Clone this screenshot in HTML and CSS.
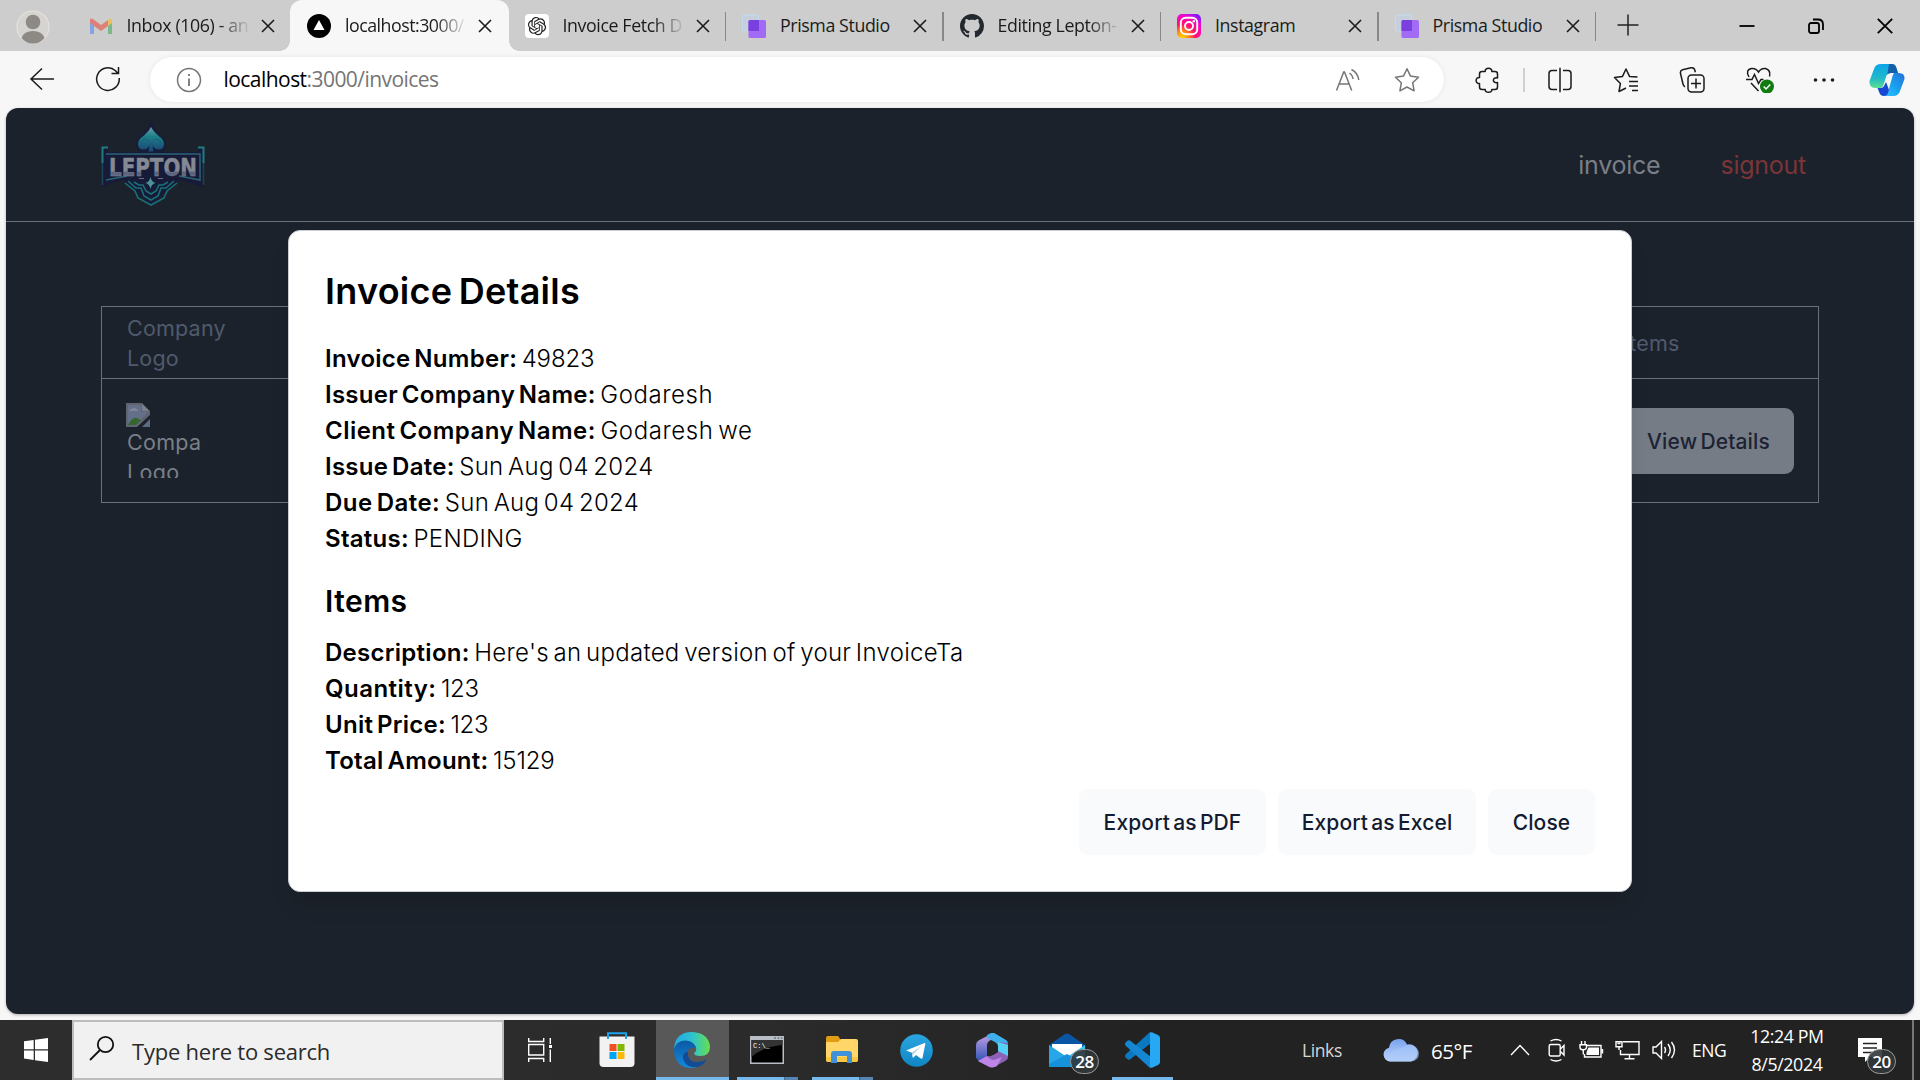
FILE: index.html
```html
<!DOCTYPE html>
<html lang="en">
<head>
<meta charset="utf-8">
<title>Invoices</title>
<link rel="stylesheet" href="styles.css">
</head>
<body>
<div class="tabs">
  <div class="profile"><svg width="34" height="34" viewBox="0 0 34 34"><circle cx="17" cy="17" r="16" fill="#d6d4d0" stroke="#e4e2de" stroke-width="1.2"/><circle cx="17" cy="12" r="7.3" fill="#8d8984"/><path d="M5.500 28Q8 21 17 21T28.500 28Q24 33.500 17 33.500T5.500 28Z" fill="#8d8984"/></svg></div>
  <div class="tab">
    <svg class="fav faded" viewBox="0 0 24 24"><path d="M0 6v14h4V10z" fill="#4285f4"/><path d="M22 6v14h-4V10z" fill="#34a853"/><path d="M0 5v4l11 8 7-5V6l-7 5-8-6q-3-1-3 0z" fill="#ea4335"/><path d="M18 6q4-3 4 1v2l-4 3z" fill="#fbbc04"/></svg>
    <span class="title t1">Inbox (106) - an</span><svg class="x" viewBox="0 0 14 14"><path d="M1 1l12 12M13 1L1 13"/></svg>
  </div>
  <div class="tab active">
    <svg class="fav" viewBox="0 0 24 24"><circle cx="12" cy="12" r="12" fill="#000"/><path d="M12 6l5.500 10h-11z" fill="#fff"/></svg>
    <span class="title t2">localhost:3000/</span><svg class="x" viewBox="0 0 14 14"><path d="M1 1l12 12M13 1L1 13"/></svg>
  </div>
  <div class="tab sep">
    <svg class="fav" viewBox="0 0 24 24"><rect width="24" height="24" rx="4" fill="#fff"/><path transform="translate(2.900 2.900) scale(.76)" fill="#222" d="M22.2819 9.8211a5.9847 5.9847 0 0 0-.5157-4.9108 6.0462 6.0462 0 0 0-6.5098-2.9A6.0651 6.0651 0 0 0 4.9807 4.1818a5.9847 5.9847 0 0 0-3.9977 2.9 6.0462 6.0462 0 0 0 .7427 7.0966 5.98 5.98 0 0 0 .511 4.9107 6.051 6.051 0 0 0 6.5146 2.9001A5.9847 5.9847 0 0 0 13.2599 24a6.0557 6.0557 0 0 0 5.7718-4.2058 5.9894 5.9894 0 0 0 3.9977-2.9001 6.0557 6.0557 0 0 0-.7475-7.0729zm-9.022 12.6081a4.4755 4.4755 0 0 1-2.8764-1.0408l.1419-.0804 4.7783-2.7582a.7948.7948 0 0 0 .3927-.6813v-6.7369l2.02 1.1686a.071.071 0 0 1 .038.052v5.5826a4.504 4.504 0 0 1-4.4945 4.4944zm-9.6607-4.1254a4.4708 4.4708 0 0 1-.5346-3.0137l.142.0852 4.783 2.7582a.7712.7712 0 0 0 .7806 0l5.8428-3.3685v2.3324a.0804.0804 0 0 1-.0332.0615L9.74 19.9502a4.4992 4.4992 0 0 1-6.1408-1.6464zM2.3408 7.8956a4.485 4.485 0 0 1 2.3655-1.9728V11.6a.7664.7664 0 0 0 .3879.6765l5.8144 3.3543-2.0201 1.1685a.0757.0757 0 0 1-.071 0l-4.8303-2.7865A4.504 4.504 0 0 1 2.3408 7.872zm16.5963 3.8558L13.1038 8.364 15.1192 7.2a.0757.0757 0 0 1 .071 0l4.8303 2.7913a4.4944 4.4944 0 0 1-.6765 8.1042v-5.6772a.79.79 0 0 0-.407-.667zm2.0107-3.0231l-.142-.0852-4.7735-2.7818a.7759.7759 0 0 0-.7854 0L9.409 9.2297V6.8974a.0662.0662 0 0 1 .0284-.0615l4.8303-2.7866a4.4992 4.4992 0 0 1 6.6802 4.66zM8.3065 12.863l-2.02-1.1638a.0804.0804 0 0 1-.038-.0567V6.0742a4.4992 4.4992 0 0 1 7.3757-3.4537l-.142.0805L8.704 5.459a.7948.7948 0 0 0-.3927.6813zm1.0976-2.3654l2.602-1.4998 2.6069 1.4998v2.9994l-2.5974 1.4997-2.6067-1.4997Z"/></svg>
    <span class="title t3">Invoice Fetch D</span><svg class="x" viewBox="0 0 14 14"><path d="M1 1l12 12M13 1L1 13"/></svg>
  </div>
  <div class="tab sep">
    <svg class="fav" viewBox="0 0 24 24"><rect x=".5" y="1" width="16" height="16" rx="1" fill="#c6d0dc" stroke="#c3dcec"/><rect x="6.500" y="6" width="17.500" height="18" rx="1.500" fill="#a26bf5"/><path d="M6.500 7.500q0-1.500 1.500-1.500h9v11H6.500z" fill="#7c3fdf"/></svg>
    <span class="title t4">Prisma Studio</span><svg class="x" viewBox="0 0 14 14"><path d="M1 1l12 12M13 1L1 13"/></svg>
  </div>
  <div class="tab sep">
    <svg class="fav" viewBox="0 0 16 16"><path fill="#24292f" d="M8 0C3.580 0 0 3.580 0 8c0 3.540 2.290 6.530 5.470 7.590.4.070.55-.17.55-.38 0-.19-.01-.82-.01-1.490-2.010.37-2.530-.49-2.690-.94-.09-.23-.48-.94-.82-1.130-.28-.15-.68-.52-.01-.53.63-.01 1.080.58 1.230.82.72 1.210 1.870.87 2.330.66.070-.52.280-.87.510-1.070-1.780-.2-3.640-.89-3.640-3.950 0-.87.31-1.590.82-2.150-.08-.2-.36-1.020.08-2.120 0 0 .67-.21 2.200.82.640-.18 1.320-.27 2-.27s1.360.09 2 .27c1.530-1.040 2.200-.82 2.200-.82.440 1.100.160 1.920.080 2.120.51.560.82 1.270.82 2.150 0 3.070-1.870 3.750-3.650 3.950.29.250.54.730.54 1.480 0 1.070-.01 1.930-.01 2.200 0 .21.150.46.550.38A8.010 8.010 0 0 0 16 8c0-4.420-3.580-8-8-8z"/></svg>
    <span class="title t5">Editing Lepton-</span><svg class="x" viewBox="0 0 14 14"><path d="M1 1l12 12M13 1L1 13"/></svg>
  </div>
  <div class="tab sep">
    <svg class="fav" viewBox="0 0 24 24"><defs><radialGradient id="ig" cx=".2" cy="1" r="1.150"><stop offset="0" stop-color="#ffd800"/><stop offset=".25" stop-color="#ff8a10"/><stop offset=".5" stop-color="#ff0f6c"/><stop offset=".8" stop-color="#f707c8"/><stop offset="1" stop-color="#7b1bff"/></radialGradient></defs><rect width="24" height="24" rx="5" fill="url(#ig)"/><g fill="none" stroke="#fff" stroke-width="1.900"><rect x="3.800" y="3.800" width="16.400" height="16.400" rx="5"/><circle cx="12" cy="12" r="4"/></g><circle cx="16.800" cy="7.200" r="1.200" fill="#fff"/></svg>
    <span class="title t6">Instagram</span><svg class="x" viewBox="0 0 14 14"><path d="M1 1l12 12M13 1L1 13"/></svg>
  </div>
  <div class="tab sep">
    <svg class="fav" viewBox="0 0 24 24"><rect x=".5" y="1" width="16" height="16" rx="1" fill="#c6d0dc" stroke="#c3dcec"/><rect x="6.500" y="6" width="17.500" height="18" rx="1.500" fill="#a26bf5"/><path d="M6.500 7.500q0-1.500 1.500-1.500h9v11H6.500z" fill="#7c3fdf"/></svg>
    <span class="title t4">Prisma Studio</span><svg class="x" viewBox="0 0 14 14"><path d="M1 1l12 12M13 1L1 13"/></svg>
  </div>
  <div class="newtab"><svg width="22" height="22" viewBox="0 0 22 22"><path d="M11 .5v21M.5 11h21" stroke="#222" stroke-width="1.500"/></svg></div>
  <div class="winbtns">
    <svg width="16" height="16" viewBox="0 0 16 16"><path d="M.5 8h15"/></svg>
    <svg width="16" height="16" viewBox="0 0 16 16"><rect x="1" y="5" width="10" height="10" rx="2"/><path d="M5 1.500h5q5 0 5 5V12"/></svg>
    <svg width="16" height="16" viewBox="0 0 16 16"><path d="M.8.8l14.400 14.400M15.200.8L.8 15.200"/></svg>
  </div>
</div>

<div class="toolbar">
  <div class="navbtns">
    <svg width="26" height="26" viewBox="0 0 26 26"><path d="M25 13H2M13 2.500L2 13l11 10.500"/></svg>
    <svg width="26" height="26" viewBox="0 0 26 26"><path d="M24.200 12a11.300 11.300 0 1 1-3.700-7.300L23 7.500M23.500 1v6.500h-7"/></svg>
  </div>
  <div class="address">
    <svg width="26" height="26" viewBox="0 0 26 26"><circle cx="13" cy="13" r="11.500"/><path d="M13 11.500v7.500M13 7v2" stroke-width="1.800"/></svg>
    <span class="url"><b>localhost</b>:3000/invoices</span>
    <svg class="read" width="26" height="26" viewBox="0 0 26 26"><path d="M1.500 23.500L8.700 5h.8l7.200 18.500M4.200 17h9.800M14.500 6q3 2 3.500 6M16.500 2.500q6.500 3.500 7.300 10.500"/></svg>
    <svg width="26" height="26" viewBox="0 0 26 26"><path d="M13 1.800l3.500 7.300 8 1.100-5.800 5.600 1.400 8-7.100-3.800-7.100 3.800 1.400-8-5.800-5.600 8-1.100z" stroke-linejoin="round"/></svg>
  </div>
  <div class="tools">
    <svg width="26" height="26" viewBox="0 0 26 26"><path d="M7 4.500h3.200C9.500.3 17.500.3 16.800 4.500H20q2.500 0 2.500 2.500v4c-5.500-1.200-5.500 5.700 0 4.500V20q0 2.500-2.500 2.500h-3.200c.5 3.600-7.100 3.600-6.600 0H7Q4.500 22.500 4.500 20v-3.500c-4.500.5-4.500-6.500 0-6V7Q4.500 4.500 7 4.500z" stroke-linejoin="round"/></svg>
    <i class="bar"></i>
    <svg width="26" height="26" viewBox="0 0 26 26"><path d="M10 3.500H5Q2 3.500 2 6.500v13q0 3 3 3h5M16 3.500h5q3 0 3 3v13q0 3-3 3h-5M13 .8v24.400"/></svg>
    <svg width="26" height="26" viewBox="0 0 26 26"><path d="M13 21l-7 3.500 1.400-8L1.500 10.500l8-1.100L13 2l3.500 7.400L24.500 10M16 14.500h9M16 19h9M19 23.500h6" stroke-linejoin="round"/></svg>
    <svg width="26" height="26" viewBox="0 0 26 26"><rect x="9" y="8" width="16" height="17" rx="3.500"/><path d="M17 11.500v10M12 16.500h10M6 20q-1.500-1-2-3L1.500 6.500q-.5-3 2-3.700L12 .8q3-.5 3.700 2l.6 2.500"/></svg>
    <svg class="heart" width="30" height="26" viewBox="0 0 30 26"><path d="M4 10Q0 3 6.500 1.500 11 1 13.500 5 16 1 20.500 1.500 26 3 24.500 9.500M1 12.500h6l2.500-5 4 9 2.500-4h2.500M6 16l7.500 8"/><circle cx="22" cy="19.500" r="7" fill="#107c10" stroke="none"/><path d="M18.700 19.500l2.300 2.400 4.300-4.500" stroke="#fff"/></svg>
    <svg width="26" height="26" viewBox="0 0 26 26"><g fill="#1b1b1b" stroke="none"><circle cx="4.500" cy="13" r="1.800"/><circle cx="13" cy="13" r="1.800"/><circle cx="21.500" cy="13" r="1.800"/></g></svg>
    <svg width="36" height="34" viewBox="0 0 36 34"><defs><linearGradient id="c1" x1="0" y1="0" x2="0" y2="1"><stop offset="0" stop-color="#0aa5e8"/><stop offset=".6" stop-color="#22b9c8"/><stop offset="1" stop-color="#5be08c"/></linearGradient><linearGradient id="c2" x1="1" y1="0" x2="0" y2="1"><stop offset="0" stop-color="#2470d8"/><stop offset=".6" stop-color="#18a7f3"/><stop offset="1" stop-color="#35c3ff"/></linearGradient></defs><g stroke="none"><path d="M12 1h10q4 0 5.500 5l1.500 4h-7q-4 0-5 4l-2.500 8q-1 3-4 3H6q-6 0-5.500-7L5 6q1.500-5 7-5z" fill="url(#c1)"/><path d="M20 1h3q3.500 0 4.500 4l1.500 5h-7q-2.500 0-3.700 1.500z" fill="#135fa8"/><path d="M25 10h5q6 0 5.500 6L31 28q-1.500 5-7 5H15q3-1 4-4l4-14q.5-3 2-5z" fill="url(#c2)"/><path d="M8.500 25h3q3 0 4-3l1.500-3q2 5 3 8l-1 3q-1 3-4 3-3.500 0-4.500-3z" fill="#1648d3"/></g></svg>
  </div>
</div>

<main class="page">
  <header class="site">
    <svg class="logo" width="104" height="90" viewBox="0 0 104 90">
      <defs><linearGradient id="sp" x1="0" y1="0" x2="0" y2="1"><stop offset="0" stop-color="#6a9aa2"/><stop offset=".4" stop-color="#1a7f88"/><stop offset="1" stop-color="#1b4475"/></linearGradient><linearGradient id="lt" x1="0" y1="0" x2="0" y2="1"><stop offset=".6" stop-color="#858994"/><stop offset=".65" stop-color="#5c6480"/></linearGradient></defs>
      <path d="M50 0q1 8 6 13 9 7 9 14l-3 9H38l-3-9q0-7 9-14 5-5 6-13z" fill="#171d38"/>
      <path d="M50 9q2 4 7 8.500 6 4 6 8.500 0 5.500-5.500 5.500-4 0-6-4l1 6h-5l1-6q-2 4-6 4-5.500 0-5.500-5.500 0-4.500 6-8.500 5-4.500 7-8.500z" fill="url(#sp)"/>
      <path d="M40 28q-1-5 4-7 4 0 6 6 2-6 6-6 5 2 4 7" fill="none" stroke="#23577a" stroke-width=".8"/>
      <path d="M1 29h6v5h90v-5h6v40L78 62 50 87 22 62 1 69z" fill="#171b37"/>
      <path d="M7 29.500H1.500V45M97 29.500h5.500V45" fill="none" stroke="#1f7d84" stroke-width="2"/>
      <path d="M1.500 45v22M102.500 45v22" fill="none" stroke="#1c4458" stroke-width="1.500"/>
      <path d="M5 36h94v26L78 58M26 58L5 62z" fill="none" stroke="#2b6477" stroke-width="1.500"/>
      <text x="8" y="58" class="logotext" textLength="88" lengthAdjust="spacingAndGlyphs" fill="url(#lt)">LEPTON</text>
      <path d="M27 63l8 7h5l3 8 7 4 7-4 3-8h5l8-7M24 65l10 8 3 7 13 7 13-7 3-7 10-8M33 64l5 3h4l3 6 5 3 5-3 3-6h4l5-3" fill="none" stroke="#187079" stroke-width="1.600"/>
      <path d="M49.500 59q1 5 5 6-4 1-5 6-1-5-5-6 4-1 5-6z" fill="#4c929c"/><path d="M38 60.500h5M57 60.500h5" stroke="#64708a"/>
    </svg>
    <nav><a class="nav-inv">invoice</a><a class="nav-out">signout</a></nav>
  </header>
  <section class="table">
    <div class="row head"><div class="cell first">Company Logo</div><div class="cell last">Items</div></div>
    <div class="row body"><div class="cell first">
      <div class="broken"><svg width="24" height="24" viewBox="0 0 24 24"><path d="M0 0h16l8 8v4L11 24H0z" fill="#5f6470"/><path d="M2 2h13v7h7L10 22H2z" fill="#64708a"/><path d="M16 1v7h7z" fill="#7b818c"/><path d="M3 8q1-2 3-2 2-3 4 0 2 0 2 2z" fill="#808794"/><path d="M2 22q5-10 11-6l2 1-5 5z" fill="#35662f"/><path d="M24 16v8h-8z" fill="#5f6a84"/></svg><span>Compa<br>Logo</span></div>
    </div><div class="cell last"><button class="btn dim">View Details</button></div></div>
  </section>

  <div class="overlay">
    <div class="modal">
      <h2>Invoice Details</h2>
      <p><b>Invoice Number:</b> <span class="num">49823</span></p>
      <p><b>Issuer Company Name:</b> <span class="name">Godaresh</span></p>
      <p><b class="wide-label">Client Company Name:</b> <span class="name">Godaresh we</span></p>
      <p><b>Issue Date:</b> <span>Sun Aug 04 2024</span></p>
      <p><b class="wide-label">Due Date:</b> <span>Sun Aug 04 2024</span></p>
      <p><b>Status:</b> <span>PENDING</span></p>
      <h3>Items</h3>
      <p><b>Description:</b> <span>Here's an updated version of your InvoiceTa</span></p>
      <p><b class="wide-label">Quantity:</b> <span class="num qty">123</span></p>
      <p><b>Unit Price:</b> <span class="num qty">123</span></p>
      <p><b>Total Amount:</b> <span class="num">15129</span></p>
      <div class="actions"><button class="btn b1">Export as PDF</button><button class="btn b2">Export as Excel</button><button class="btn b3">Close</button></div>
    </div>
  </div>
</main>

<footer class="taskbar">
  <div class="start"><svg width="24" height="24" viewBox="0 0 24 24"><path fill="#fff" d="M0 3.300l9.700-1.300v9.300H0zM11 1.800L24 0v11.300H11zM0 12.600h9.700v9.300L0 20.600zM11 12.600h13V24l-13-1.800z"/></svg></div>
  <div class="search"><svg width="26" height="26" viewBox="0 0 26 26"><circle cx="16.500" cy="9.500" r="7.700" fill="none" stroke="#111" stroke-width="1.800"/><path d="M11 15L1 25" stroke="#111" stroke-width="1.800"/></svg><span>Type here to search</span></div>
  <div class="apps">
    <div class="app task"><svg width="24" height="24" viewBox="0 0 24 24"><path d="M.7 0v3.500h15V0M.7 24v-3.500h15V24M.7 6.500h15v10.500H.7zM22.300 0v6M22.300 11.500V24" fill="none" stroke="#fff" stroke-width="1.400"/><rect x="21" y="7" width="3" height="3" fill="#fff"/></svg></div>
    <div class="app"><svg width="36" height="36" viewBox="0 0 36 36"><path d="M9 7V1.200h18V7" fill="none" stroke="#1ba4ee" stroke-width="2"/><path d="M.5 4.500h35V31q0 4-4 4h-27q-4 0-4-4z" fill="#f2f2f2"/><path d="M9 4v3M27 4v3" stroke="#1ba4ee" stroke-width="2"/><path d="M10.500 12h7v7h-7z" fill="#f25022"/><path d="M18.500 12h7v7h-7z" fill="#7fba00"/><path d="M10.500 20h7v7h-7z" fill="#00a4ef"/><path d="M18.500 20h7v7h-7z" fill="#ffb900"/></svg></div>
    <div class="app on"><svg width="36" height="36" viewBox="0 0 36 36"><defs><linearGradient id="e1"><stop offset="0" stop-color="#24a7e2"/><stop offset=".5" stop-color="#2dc2d2"/><stop offset="1" stop-color="#66e04d"/></linearGradient><linearGradient id="e2" x1="0" y1="0" x2="0" y2="1"><stop offset="0" stop-color="#0c59a4"/><stop offset="1" stop-color="#1489de"/></linearGradient></defs><path d="M0 17Q1 0 18 0q17 1 18 15 0 9-10 9-6 0-6-3 3-2 2-6Q18 8 10 9 3 10 0 17z" fill="url(#e1)"/><path d="M0 17Q3 8 12 8.500q8 .5 10 7.500-9-2-9 7 1 9 10 12Q6 39 1 25 0 21 0 17z" fill="url(#e2)"/><path d="M14 20q-1 10 9 10 6 0 10-3-3 6-9 8-14 1-15-10 0-5 5-5z" fill="#124c96"/></svg><i class="line wide"></i></div>
    <div class="app"><svg width="34" height="30" viewBox="0 0 34 30"><path d="M0 1h34v28H0z" fill="#b9bec6"/><path d="M1.500 5h31v22.500h-31z" fill="#000"/><path d="M1.500 5h31v5Q12 12 1.500 22z" fill="#333"/><path d="M24 3h2M27.500 3h2M31 3h1.500" stroke="#456"/><text x="3" y="13" class="cmd">C:\_</text></svg><i class="line more"></i></div>
    <div class="app"><svg width="32" height="28" viewBox="0 0 32 28"><path d="M0 2q0-2 2-2h10l3 4v7H0z" fill="#e09d12"/><path d="M0 6h12l3-3h15q2 0 2 2v18q0 3-2 3H2q-2 0-2-3z" fill="#ffd667"/><path d="M0 21h32v2q0 3-2 3H2q-2 0-2-3z" fill="#f9c63f"/><path d="M5 27V18q0-3 3-3h15q3 0 3 3v9h-5v-7H11v7z" fill="#3f92d8"/></svg><i class="line more"></i></div>
    <div class="app"><svg width="33" height="33" viewBox="0 0 33 33"><defs><linearGradient id="tg" x1="0" y1="0" x2="0" y2="1"><stop offset="0" stop-color="#2ba5e0"/><stop offset="1" stop-color="#0e86c4"/></linearGradient></defs><circle cx="16.500" cy="16.500" r="16.300" fill="url(#tg)"/><path d="M6 16.500L24.500 9q1-.2.800 1L22.500 24q-.5 1.300-1.700.5L16 21l-2.600 2.600q-.7.400-.8-.6l-.7-4.300z" fill="#fff"/><path d="M12 18.500l9-6.200-7.500 7.700-.8 3z" fill="#a9d3ea"/></svg></div>
    <div class="app"><svg width="32" height="35" viewBox="0 0 32 35"><defs><linearGradient id="m1" x1="0" y1="0" x2="0" y2="1"><stop offset="0" stop-color="#c9a4ea"/><stop offset="1" stop-color="#3154b4"/></linearGradient></defs><path d="M17 0L2.500 7.500Q0 9 0 12v13l3 3 8-5V12q0-4 6-6z" fill="url(#m1)"/><path d="M15 0q3-.5 4 .5L30 7q2 1 2 4v12l-10-5v-5q0-2-3-4l-8-4V2z" fill="#3fb0ee"/><path d="M32 10v14q0 2-2 3.500L18 34q-2 1-5 0L2 28l9-5q3 1 6-1l5-3V9z" fill="#8b62b8"/><path d="M11 23l-9 5 12 6q4 1 7-1l5-9-8 3q-4 0-7-4z" fill="#bd85e8"/><path d="M22 9l10 3v11l-10-5z" fill="#55d0f5"/><circle cx="16" cy="17" r="5" fill="#262626"/></svg></div>
    <div class="app"><svg width="36" height="34" viewBox="0 0 36 34"><path d="M0 12L16 1q2-1 4 0l16 11v6H0z" fill="#0a56a5"/><path d="M3 11h30v12H3z" fill="#fff"/><path d="M0 12l18 12L0 34z" fill="#27a7e7"/><path d="M36 12L18 24l18 10z" fill="#38c7f3"/><path d="M0 34V31L18 21l18 10v3z" fill="#1692dc"/></svg><span class="badge">28</span></div>
    <div class="app"><svg width="36" height="36" viewBox="0 0 36 36"><path d="M26 0L2 22q-2 2 0 4l2 1.500q1 .5 2 0L27 11z" fill="#0b78c2"/><path d="M26 36L2 14q-2-2 0-4l2-1.500q1-.5 2 0L27 25z" fill="#1486d2"/><path d="M26 .5q1-.7 2.500 0L34 3q2 1 2 3v24q0 2-2 3l-5.500 2.500q-1.500.7-2.500 0z" fill="#27a8f2"/></svg><i class="line"></i></div>
  </div>
  <div class="tray">
    <span class="links">Links</span>
    <svg class="cloud" width="36" height="24" viewBox="0 0 36 24"><defs><linearGradient id="cl" x1="0" y1="0" x2="0" y2="1"><stop offset="0" stop-color="#79a2ef"/><stop offset="1" stop-color="#c2d9fb"/></linearGradient></defs><path d="M7 23.500a7 7 0 0 1-1-13.800A9.500 9.500 0 0 1 24 6.500a8 8 0 0 1 4 17z" fill="url(#cl)"/><path d="M12 12q9-3 13-5 9-1 11 8 0 8-8 8.500H7q-5-1-6-5Z" fill="#a9c6f8" opacity=".6"/></svg>
    <span class="temp">65°F</span>
    <svg class="chev" width="20" height="12" viewBox="0 0 20 12"><path d="M1 11l9-9.500L19 11"/></svg>
    <svg class="cam" width="18" height="24" viewBox="0 0 18 24"><rect x="1.200" y="6.500" width="11" height="11.500" rx="1.500"/><path d="M12.500 11l3.500-3.500v9.500l-3.500-3.500M2.500 3Q8 0 13.500 3M2.500 21.500q5.500 3 11 0"/></svg>
    <svg class="bat" width="25" height="20" viewBox="0 0 25 20"><path d="M7 5.500h15V17H5.500v-3M23.500 9v4.500M2.500 1v3.500M6 1v3.500M1 4.700h6.500v3Q7 9.800 4.300 9.800T1 7.700zM4.300 10v4.500"/><path d="M9.500 7.500H20v7.500H7.500v-3z" fill="#fff" stroke="none"/></svg>
    <svg class="net" width="25" height="20" viewBox="0 0 25 20"><path d="M8 1.700h16v12.800H5.500V10M14.500 15v3.500M9.500 18.700h10M1 1.700h6v5H1zM4 7v3M2.500 3.500h3"/></svg>
    <svg class="vol" width="24" height="20" viewBox="0 0 24 20"><path d="M1 7h3l5.500-5.500v17L4 13H1zM12.500 7q2 3 0 6M16 4q4.500 6 0 12M19.500 2q6 8 0 16"/></svg>
    <span class="lang">ENG</span>
    <span class="clock"><span class="tm">12:24 PM</span><span class="dt">8/5/2024</span></span>
    <span class="note"><svg width="24" height="24" viewBox="0 0 24 24"><path d="M0 0h24v19H12l-5 5v-5H0z" fill="#fff" stroke="none"/><path d="M5 5.500h14M5 10h14M5 14.500h9" stroke="#222"/></svg><span class="badge">20</span></span>
    <i class="desk"></i>
  </div>
</footer>
</body>
</html>
```
FILE: styles.css
```css
* { box-sizing: border-box; }
body { margin: 0; width: 1920px; height: 1080px; overflow: hidden; display: flex; flex-direction: column; background: #f7f7f7; font-family: "Open Sans", "Noto Sans", sans-serif; }
svg { display: block; flex: none; }
i { display: block; }

/* browser tabs */
.tabs { height: 51px; background: #cdcdcd; display: flex; align-items: stretch; flex: none; }
.profile { width: 72.500px; padding: 10px 0 0 16px; flex: none; }
.tab { width: 217.500px; flex: none; display: flex; align-items: center; padding-left: 17px; position: relative; }
.fav { width: 24px; height: 24px; }
.faded { opacity: .55; }
.title { width: 120px; margin: 0 0 1px 14px; font-size: 17.800px; line-height: 24px; color: #1b1b1b; white-space: nowrap; overflow: hidden; letter-spacing: -.4px; }
.t1 { margin-left: 13px; width: 121px; }
.t1, .t2, .t3, .t5 { -webkit-mask-image: linear-gradient(90deg, #000 75%, transparent 102%); mask-image: linear-gradient(90deg, #000 75%, transparent 102%); }
.t2 { letter-spacing: -.5px; }
.x { width: 14px; height: 14px; margin-left: 13px; stroke: #1b1b1b; stroke-width: 1.600; }
.active { background: #f7f7f7; border-radius: 12px 12px 0 0; width: 219px; margin-right: -1.500px; }
.active::before, .active::after { content: ""; position: absolute; bottom: 0; width: 10px; height: 10px; }
.active::before { left: -10px; background: radial-gradient(circle at 0 0, transparent 9.500px, #f7f7f7 10px); }
.active::after { right: -10px; background: radial-gradient(circle at 100% 0, transparent 9.500px, #f7f7f7 10px); }
.sep::after { content: ""; position: absolute; right: -1px; top: 12px; width: 1.500px; height: 29px; background: #888; }
.newtab { width: 66px; padding: 14px 0 0 22px; }
.winbtns { margin-left: auto; display: flex; align-items: center; gap: 53px; padding-right: 27px; }
.winbtns svg { fill: none; stroke: #000; stroke-width: 1.800; }

/* toolbar */
.toolbar { height: 57px; display: flex; align-items: flex-start; flex: none; }
.toolbar svg { fill: none; stroke: #1b1b1b; stroke-width: 1.500; }
.navbtns { width: 150px; display: flex; gap: 40px; padding: 15px 0 0 29px; flex: none; }
.address { width: 1294px; height: 45px; margin-top: 6px; border-radius: 23px; background: #fff; box-shadow: 0 0 5px rgba(0,0,0,.08); display: flex; align-items: center; padding: 0 24px 0 26px; flex: none; }
.address svg { stroke: #767676; }
.url { margin: 0 0 1px 21.500px; font-size: 21px; color: #757575; letter-spacing: -.55px; flex: 1; line-height: 30px; }
.url b { font-weight: 400; color: #000; }
.read { margin-right: 33px; }
.tools { flex: 1; display: grid; grid-template-columns: 66px 6px 66px 66px 66px 66px 66px 60px; padding-left: 11px; height: 57px; align-items: center; justify-items: center; }
.bar { width: 2px; height: 24px; background: #d0d0d0; }
.heart { margin-left: 3px; }

/* web page */
.page { height: 906px; margin: 0 6px; border-radius: 12px; background: #1c222b; position: relative; overflow: hidden; flex: none; font-family: Inter, sans-serif; box-shadow: 0 1px 3px rgba(0,0,0,.3); }
.site { height: 114px; border-bottom: 1px solid #6b717b; display: flex; justify-content: space-between; padding: 10px 108px 0 95px; }
.site nav { display: flex; gap: 60px; font-size: 25px; line-height: 36px; padding-top: 29px; letter-spacing: -.25px; }
.nav-inv { color: #7a7f87; }
.nav-out { color: #7a3539; }
.logotext { font: bold 24px "DejaVu Sans", sans-serif; stroke: #858994; stroke-width: .5px; }
.table { margin: 84px 95px 0; border: 1px solid #6b717b; font-size: 21.500px; line-height: 30px; letter-spacing: .3px; }
.row { display: flex; justify-content: space-between; align-items: center; padding: 0 24px 0 25px; }
.head { height: 72px; padding-top: 1px; border-bottom: 1px solid #6b717b; color: #4f5a6d; }
.head .first { width: 110px; letter-spacing: .2px; }
.head .last { width: 171px; letter-spacing: .15px; }
.body { height: 123px; padding-left: 24px; }
.broken { width: 77px; height: 75px; overflow: hidden; color: #7a7f87; }
.broken span { display: block; margin-left: 1px; }
.btn { border: 0; height: 66px; padding: 2px 0 0; border-radius: 9px; background: #f9fafc; color: #131b31; font: 500 21px/30px Inter, sans-serif; white-space: nowrap; letter-spacing: .13px; word-spacing: -2.500px; }
.dim { background: #767c85; color: #1b2233; width: 171px; }

/* dialog */
.overlay { position: absolute; inset: 0; display: flex; align-items: center; justify-content: center; }
.modal { width: 1344px; height: 662px; border: 1px solid #c9ccd1; border-radius: 12px; background: #fff; padding: 36px; color: #000; box-shadow: 0 15px 22px -5px rgba(0,0,0,.15); }
h2 { margin: 0 0 26px; font-size: 36px; line-height: 48px; font-weight: 600; letter-spacing: .27px; word-spacing: -3px; }
h3 { margin: 23px 0 13px; font-size: 30px; line-height: 42px; font-weight: 600; letter-spacing: .45px; }
.modal p { margin: 0; font-size: 24px; line-height: 36px; font-weight: 300; letter-spacing: .3px; word-spacing: -2.500px; white-space: nowrap; }
.modal p b { font-weight: 600; letter-spacing: .27px; }
.modal p .wide-label { letter-spacing: .47px; }
.name { letter-spacing: .58px; }
.num { letter-spacing: -.15px; }
.qty { letter-spacing: -.4px; }
.actions { display: flex; justify-content: flex-end; gap: 12px; margin-top: 10px; }
.b1 { width: 187px; }
.b2 { width: 198px; }
.b3 { width: 107px; }

/* taskbar */
.taskbar { height: 60px; margin-top: 6px; flex: none; display: flex; background: linear-gradient(90deg, #2d2d2d, #2b2b2b 40%, #222 60%); color: #fff; }
.start { width: 72px; padding: 18px 0 0 24px; flex: none; }
.search { width: 432px; flex: none; background: #f1f1f1; border: 2px solid #bdbdbd; display: flex; align-items: center; padding-left: 15px; color: #2b2b2b; font-size: 22px; letter-spacing: -.23px; }
.search svg { margin-bottom: 4px; }
.search span { margin-left: 17px; line-height: 30px; margin-top: 1px; }
.apps { display: flex; flex: none; }
.app { width: 75px; display: flex; align-items: center; justify-content: center; position: relative; }
.task { padding-right: 3px; }
.on { background: #585858; width: 73px; margin: 0 0 0 2px; }
.on svg { margin-right: 2px; }
.line { position: absolute; bottom: 0; left: 8px; width: 61px; height: 3px; background: #76b9ed; }
.wide { left: 0; width: 73px; }
.more { background: linear-gradient(90deg, #76b9ed 47px, #3f6688 47px, #5585b0 49px); }
.cmd { font: 7px "Liberation Mono", monospace; fill: #fff; }
.badge { position: absolute; width: 29px; height: 25px; border-radius: 13px; border: 1px solid #999; background: rgba(50,55,58,.9); font-size: 17px; line-height: 23px; text-align: center; letter-spacing: -.5px; font-weight: 600; left: 41px; top: 29px; }
.tray { flex: 1; display: flex; align-items: center; position: relative; font-size: 17.500px; letter-spacing: -.4px; white-space: nowrap; }
.tray svg { fill: none; stroke: #fff; stroke-width: 1.400; }
.tray .cloud { stroke: none; margin-right: 12px; }
.links { margin-left: 123px; width: 81px; color: #d6d6d6; }
.temp { width: 79px; font-size: 20.500px; line-height: 28px; letter-spacing: -.5px; padding-top: 2px; }
.chev { margin-right: 18px; }
.cam { margin-right: 13px; }
.bat { margin-right: 11px; }
.net { margin-right: 12px; }
.vol { margin-right: 16px; }
.lang { width: 51px; }
.clock { width: 88px; display: flex; flex-direction: column; text-align: center; line-height: 28px; font-size: 17.800px; }
.note { position: relative; margin-left: 27px; }
.note .badge { left: 9px; top: 11px; }
.desk { width: 2px; height: 60px; background: #777; margin-left: auto; margin-right: 6px; }
```
